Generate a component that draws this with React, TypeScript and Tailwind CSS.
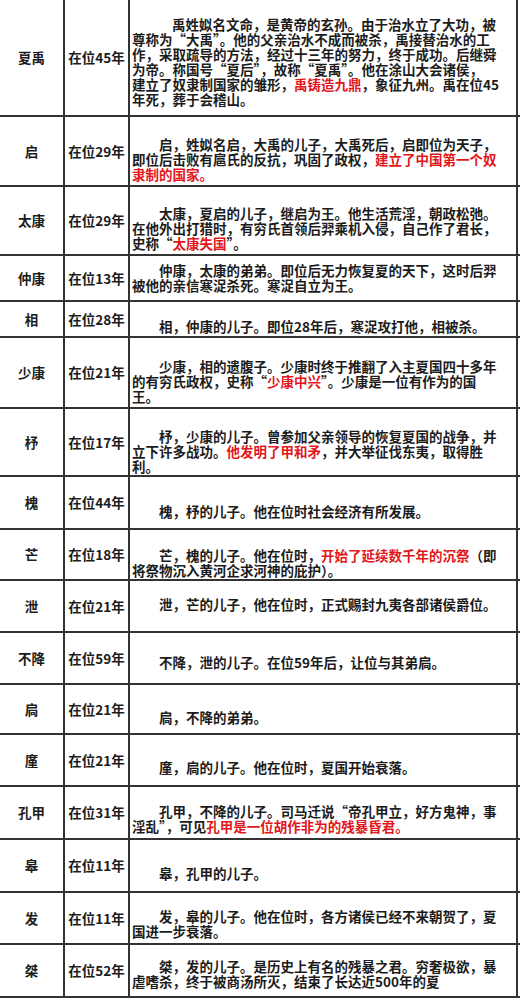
import type { ReactNode } from "react";

// ─── Helpers ─────────────────────────────────────────────────────────────────

function Red({ children }: { children: ReactNode }) {
  return <span className="text-[#e3161b]">{children}</span>;
}

type Row = {
  name: string;
  reign: string;
  h: string;
  pad: string;
  indent?: string;
  body: ReactNode;
};

// ─── Data ────────────────────────────────────────────────────────────────────

const rows: Row[] = [
  {
    name: "夏禹",
    reign: "在位45年",
    h: "h-[117px]",
    pad: "pt-[8px]",
    indent: "indent-[40px]",
    body: (
      <>
        禹姓姒名文命，是黄帝的玄孙。由于治水立了大功，被
        <br />
        尊称为“大禹”。他的父亲治水不成而被杀，禹接替治水的工
        <br />
        作，采取疏导的方法，经过十三年的努力，终于成功。后继舜
        <br />
        为帝。称国号“夏后”，故称“夏禹”。他在涂山大会诸侯，
        <br />
        建立了奴隶制国家的雏形，<Red>禹铸造九鼎</Red>，象征九州。禹在位45
        <br />
        年死，葬于会稽山。
      </>
    ),
  },
  {
    name: "启",
    reign: "在位29年",
    h: "h-[70px]",
    pad: "pt-[16px]",
    body: (
      <>
        启，姓姒名启，大禹的儿子，大禹死后，启即位为天子，
        <br />
        即位后击败有扈氏的反抗，巩固了政权，<Red>建立了中国第一个奴</Red>
        <br />
        <Red>隶制的国家。</Red>
      </>
    ),
  },
  {
    name: "太康",
    reign: "在位29年",
    h: "h-[69px]",
    pad: "pt-[16px]",
    body: (
      <>
        太康，夏启的儿子，继启为王。他生活荒淫，朝政松弛。
        <br />
        在他外出打猎时，有穷氏首领后羿乘机入侵，自己作了君长，
        <br />
        史称“<Red>太康失国</Red>”。
      </>
    ),
  },
  {
    name: "仲康",
    reign: "在位13年",
    h: "h-[46px]",
    pad: "pt-[0px]",
    body: (
      <>
        仲康，太康的弟弟。即位后无力恢复夏的天下，这时后羿
        <br />
        被他的亲信寒浞杀死。寒浞自立为王。
      </>
    ),
  },
  {
    name: "相",
    reign: "在位28年",
    h: "h-[36px]",
    pad: "pt-[14px]",
    body: <>相，仲康的儿子。即位28年后，寒浞攻打他，相被杀。</>,
  },
  {
    name: "少康",
    reign: "在位21年",
    h: "h-[71px]",
    pad: "pt-[18px]",
    body: (
      <>
        少康，相的遗腹子。少康时终于推翻了入主夏国四十多年
        <br />
        的有穷氏政权，史称“<Red>少康中兴</Red>”。少康是一位有作为的国
        <br />
        王。
      </>
    ),
  },
  {
    name: "杼",
    reign: "在位17年",
    h: "h-[68px]",
    pad: "pt-[18px]",
    body: (
      <>
        杼，少康的儿子。曾参加父亲领导的恢复夏国的战争，并
        <br />
        立下许多战功。<Red>他发明了甲和矛</Red>，并大举征伐东夷，取得胜
        <br />
        利。
      </>
    ),
  },
  {
    name: "槐",
    reign: "在位44年",
    h: "h-[53px]",
    pad: "pt-[18px]",
    body: <>槐，杼的儿子。他在位时社会经济有所发展。</>,
  },
  {
    name: "芒",
    reign: "在位18年",
    h: "h-[51px]",
    pad: "pt-[16px]",
    body: (
      <>
        芒，槐的儿子。他在位时，<Red>开始了延续数千年的沉祭</Red>（即
        <br />
        将祭物沉入黄河企求河神的庇护）。
      </>
    ),
  },
  {
    name: "泄",
    reign: "在位21年",
    h: "h-[52px]",
    pad: "pb-[4px]",
    body: <>泄，芒的儿子，他在位时，正式赐封九夷各部诸侯爵位。</>,
  },
  {
    name: "不降",
    reign: "在位59年",
    h: "h-[52px]",
    pad: "pt-[8px]",
    body: <>不降，泄的儿子。在位59年后，让位与其弟扃。</>,
  },
  {
    name: "扃",
    reign: "在位21年",
    h: "h-[50px]",
    pad: "pt-[16px]",
    body: <>扃，不降的弟弟。</>,
  },
  {
    name: "廑",
    reign: "在位21年",
    h: "h-[52px]",
    pad: "pt-[14px]",
    body: <>廑，扃的儿子。他在位时，夏国开始衰落。</>,
  },
  {
    name: "孔甲",
    reign: "在位31年",
    h: "h-[53px]",
    pad: "pt-[12px]",
    body: (
      <>
        孔甲，不降的儿子。司马迁说“帝孔甲立，好方鬼神，事
        <br />
        淫乱”，可见<Red>孔甲是一位胡作非为的残暴昏君。</Red>
      </>
    ),
  },
  {
    name: "皋",
    reign: "在位11年",
    h: "h-[53px]",
    pad: "pt-[16px]",
    body: <>皋，孔甲的儿子。</>,
  },
  {
    name: "发",
    reign: "在位11年",
    h: "h-[52px]",
    pad: "pt-[12px]",
    body: (
      <>
        发，皋的儿子。他在位时，各方诸侯已经不来朝贺了，夏
        <br />
        国进一步衰落。
      </>
    ),
  },
  {
    name: "桀",
    reign: "在位52年",
    h: "h-[53px]",
    pad: "pt-[6px]",
    body: (
      <>
        桀，发的儿子。是历史上有名的残暴之君。穷奢极欲，暴
        <br />
        虐嗜杀，终于被商汤所灭，结束了长达近500年的夏
      </>
    ),
  },
];

// ─── Page ────────────────────────────────────────────────────────────────────

export default function App() {
  return (
    <div
      lang="zh-CN"
      className="w-[520px] h-[1000px] bg-white font-['Noto_Sans_CJK_SC','Noto_Sans_CJK_TC',sans-serif] text-[13.5px] leading-[15px] font-bold text-[#1c1c1c] overflow-hidden"
    >
      {rows.map((r) => (
        <div key={r.name} className={`flex ${r.h} border-b-2 border-[#333]`}>
          {/* Name */}
          <div className="w-[65px] shrink-0 border-r-2 border-[#333] flex items-center justify-center">
            {r.name}
          </div>

          {/* Reign */}
          <div className="w-[65px] shrink-0 border-r-2 border-[#333] flex items-center justify-center">
            {r.reign}
          </div>

          {/* Description */}
          <div className={`w-[388px] shrink-0 border-r-2 border-[#333] flex items-center pl-[2px] ${r.pad}`}>
            <p className={`whitespace-nowrap ${r.indent ?? "indent-[27px]"}`}>{r.body}</p>
          </div>
        </div>
      ))}
    </div>
  );
}
